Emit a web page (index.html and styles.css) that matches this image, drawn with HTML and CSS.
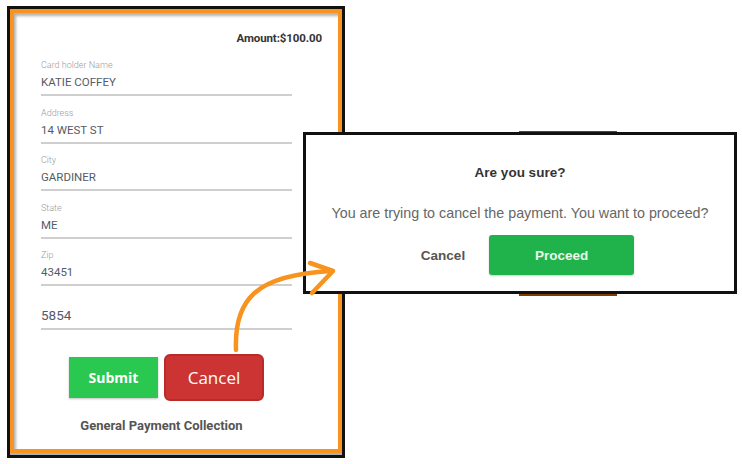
FILE: index.html
```html
<!DOCTYPE html>
<html>
<head>
<meta charset="utf-8">
<link rel="stylesheet" href="styles.css">
</head>
<body>
<div class="frame">
  <div class="card">
    <div class="amount">Amount:$100.00</div>
    <div class="fields">
      <div class="field"><div class="label">Card holder Name</div><div class="value">KATIE COFFEY</div></div>
      <div class="field"><div class="label">Address</div><div class="value">14 WEST ST</div></div>
      <div class="field"><div class="label">City</div><div class="value">GARDINER</div></div>
      <div class="field"><div class="label">State</div><div class="value">ME</div></div>
      <div class="field"><div class="label">Zip</div><div class="value">43451</div></div>
      <div class="field last"><div class="value big">5854</div></div>
    </div>
    <div class="actions">
      <button class="btn submit">Submit</button>
      <button class="btn cancel">Cancel</button>
    </div>
    <div class="footer">General Payment Collection</div>
  </div>
</div>

<div class="behind"></div>
<div class="dialog">
  <div class="title">Are you sure?</div>
  <div class="msg">You are trying to cancel the payment. You want to proceed?</div>
  <div class="dlg-actions">
    <button class="dlg-cancel">Cancel</button>
    <button class="proceed">Proceed</button>
  </div>
</div>

<svg class="arrow" width="742" height="464" viewBox="0 0 742 464">
  <path d="M236 350 C 234 300, 255 275, 331 271" fill="none" stroke="#f7931e" stroke-width="4.5" stroke-linecap="round"/>
  <path d="M310 263 L333 271 L312 293" fill="none" stroke="#f7931e" stroke-width="4.5" stroke-linecap="round" stroke-linejoin="round"/>
</svg>
</body>
</html>
```
FILE: styles.css
```css
html, body {
  margin: 0;
  padding: 0;
  background: #ffffff;
}
body {
  position: relative;
  width: 742px;
  height: 464px;
  overflow: hidden;
  font-family: Roboto, "Liberation Sans", sans-serif;
}
.frame {
  margin: 6px 0 0 7px;
  width: 332px;
  height: 444px;
  border: 3px solid #111;
  padding-bottom: 2px;
  background: #a8b0b8;
}
.card {
  box-sizing: border-box;
  width: 332px;
  height: 444px;
  border: 4px solid #f7931e;
  background: #fff;
  box-shadow: inset 2px 3px 3px rgba(0,0,0,0.3);
  padding: 18px 16px 0 27px;
}
.amount {
  text-align: right;
  font-weight: 700;
  font-size: 11.5px;
  line-height: 14px;
  color: #333;
  letter-spacing: -0.1px;
}
.fields {
  width: 251px;
  margin-top: 15px;
}
.field {
  border-bottom: 2px solid #cfcfcf;
  padding-bottom: 5px;
  margin-bottom: 11.5px;
}
.field.last {
  margin-top: 20.5px;
  margin-bottom: 0;
}
.label {
  font-size: 9px;
  line-height: 10px;
  color: #9a9a9a;
  font-weight: 300;
  margin-bottom: 5px;
}
.value {
  font-size: 11.5px;
  line-height: 14px;
  color: #555b66;
}
.value.big {
  font-size: 13.5px;
  line-height: 16px;
}
.actions {
  width: 251px;
  display: flex;
  justify-content: center;
  align-items: center;
  gap: 6px;
  margin-top: 24px;
}
.btn {
  border: none;
  color: #fff;
  font-family: "Open Sans", sans-serif;
  padding: 0;
  cursor: pointer;
}
.submit {
  width: 89px;
  height: 41px;
  background: #2ac850;
  font-weight: 700;
  font-size: 14px;
  box-shadow: 0 1px 2px rgba(0,0,0,0.25);
}
.cancel {
  box-sizing: border-box;
  width: 100px;
  height: 47px;
  background: #cc3434;
  border: 2px solid #b92a2a;
  border-radius: 6px;
  font-size: 17px;
  font-weight: 400;
}
.footer {
  width: 241px;
  padding-right: 10px;
  text-align: center;
  font-weight: 700;
  font-size: 13px;
  line-height: 14px;
  color: #555;
  margin-top: 18px;
}
.behind {
  position: absolute;
  left: 519px;
  top: 131px;
  width: 98px;
  height: 165px;
  background: #7a3d05;
}
.dialog {
  position: absolute;
  left: 303px;
  top: 132px;
  width: 428px;
  height: 156px;
  border: 3px solid #111;
  background: #fff;
  display: flex;
  flex-direction: column;
  align-items: center;
  font-family: "Liberation Sans", Arial, sans-serif;
}
.title {
  margin-top: 30px;
  font-weight: 700;
  font-size: 13.5px;
  line-height: 16px;
  color: #333;
}
.msg {
  margin-top: 24px;
  font-size: 14.3px;
  line-height: 16px;
  color: #666;
}
.dlg-actions {
  margin-top: 14px;
  display: flex;
  align-items: center;
  gap: 9px;
}
.dlg-cancel {
  background: none;
  border: none;
  padding: 0 15px;
  font-family: "Liberation Sans", Arial, sans-serif;
  font-weight: 700;
  font-size: 13.5px;
  color: #555;
}
.proceed {
  width: 145px;
  height: 40px;
  border: none;
  border-radius: 3px;
  background: #20b34b;
  color: #eaf7ea;
  font-family: "Liberation Sans", Arial, sans-serif;
  font-weight: 700;
  font-size: 13.5px;
  box-shadow: 0 1px 2px rgba(0,0,0,0.2);
}
.arrow {
  position: absolute;
  left: 0;
  top: 0;
  pointer-events: none;
}
```
